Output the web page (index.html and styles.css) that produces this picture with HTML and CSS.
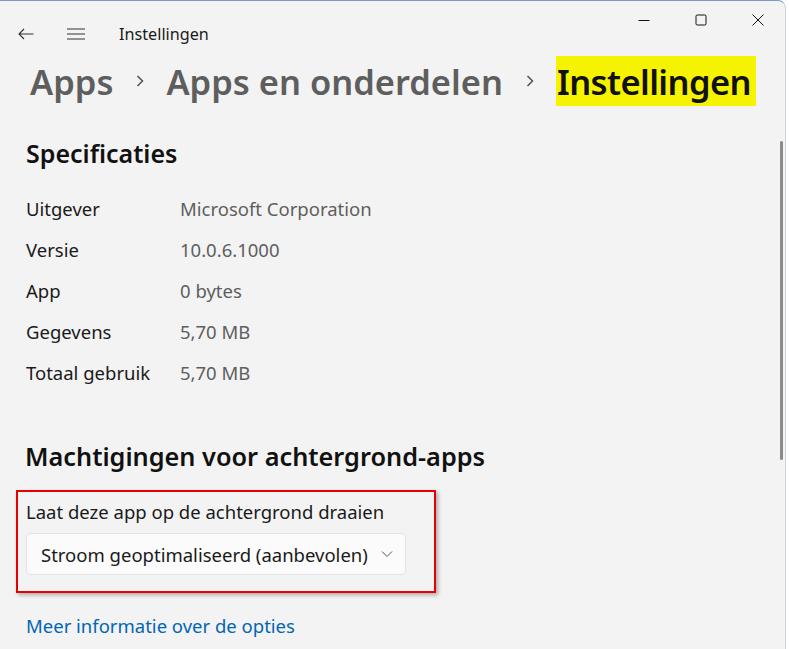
FILE: index.html
```html
<!DOCTYPE html>
<html>
<head>
  <title>Instellingen</title>
  <link rel="stylesheet" href="styles.css">
</head>
<body>
  <div class="window">
    <header class="titlebar">
      <div class="nav">
        <svg class="icon back" width="16" height="12" viewBox="0 0 16 12">
          <path d="M15.5 6H1M6 1L1 6l5 5" fill="none" stroke="#333" stroke-width="1.1"/>
        </svg>
        <svg class="icon menu" width="18" height="12" viewBox="0 0 18 12">
          <path d="M0 1h18M0 6h18M0 11h18" fill="none" stroke="#333" stroke-width="1.1"/>
        </svg>
        <span class="apptitle">Instellingen</span>
      </div>
      <div class="controls">
        <svg width="12" height="12" viewBox="0 0 12 12"><path d="M0.5 6.5h11" stroke="#111" stroke-width="1"/></svg>
        <svg width="12" height="12" viewBox="0 0 12 12"><rect x="1" y="1" width="10" height="10" rx="1.2" fill="none" stroke="#111" stroke-width="1"/></svg>
        <svg width="12" height="12" viewBox="0 0 12 12"><path d="M0.5 0.5l11 11M11.5 0.5l-11 11" stroke="#111" stroke-width="1"/></svg>
      </div>
    </header>

    <h1 class="crumbs">
      <span class="crumb">Apps</span>
      <svg class="sep" width="10" height="14" viewBox="0 0 10 14"><path d="M2.5 2l5 5-5 5" fill="none" stroke="#555" stroke-width="1.6"/></svg>
      <span class="crumb">Apps en onderdelen</span>
      <svg class="sep" width="10" height="14" viewBox="0 0 10 14"><path d="M2.5 2l5 5-5 5" fill="none" stroke="#555" stroke-width="1.6"/></svg>
      <span class="crumb current">Instellingen</span>
    </h1>

    <main class="content">
      <h2>Specificaties</h2>
      <dl class="specs">
        <dt>Uitgever</dt><dd>Microsoft Corporation</dd>
        <dt>Versie</dt><dd>10.0.6.1000</dd>
        <dt>App</dt><dd>0 bytes</dd>
        <dt>Gegevens</dt><dd>5,70 MB</dd>
        <dt>Totaal gebruik</dt><dd>5,70 MB</dd>
      </dl>

      <h2 class="perms">Machtigingen voor achtergrond-apps</h2>
      <div class="marked">
        <p class="label">Laat deze app op de achtergrond draaien</p>
        <div class="select">
          <span>Stroom geoptimaliseerd (aanbevolen)</span>
          <svg width="12" height="8" viewBox="0 0 12 8"><path d="M1 1.5l5 5 5-5" fill="none" stroke="#555" stroke-width="1"/></svg>
        </div>
      </div>
      <a class="more" href="#opties">Meer informatie over de opties</a>
    </main>

    <div class="scrollbar"></div>
  </div>
</body>
</html>
```

FILE: styles.css
```css
html, body {
  margin: 0;
  padding: 0;
  background: #fff;
}

body {
  font-family: "Noto Sans", "Open Sans", sans-serif;
  color: #1a1a1a;
}

.window {
  position: relative;
  width: 785px;
  height: 648px;
  background: #f3f3f3;
  border-top: 1px solid #7b9cbf;
  border-right: 1px solid #c9d6e4;
  border-top-right-radius: 8px;
  overflow: hidden;
}

.titlebar {
  display: flex;
  justify-content: space-between;
  height: 50px;
}

.nav {
  display: flex;
  align-items: center;
  padding: 15px 0 0 18px;
}

.icon.back {
  margin-right: 33px;
}

.icon.menu {
  margin-right: 34px;
}

.apptitle {
  font-size: 16.2px;
  color: #1a1a1a;
}

.controls {
  display: flex;
  align-items: flex-start;
  gap: 45px;
  padding: 13px 21px 0 0;
}

.crumbs {
  display: flex;
  align-items: center;
  margin: 5px 0 0 30px;
  font-size: 34.5px;
  font-weight: 600;
  color: #5e5e5e;
}

.crumb.current {
  color: #111;
  background: #f6f300;
  padding: 2px 5px 1px 1px;
  letter-spacing: -0.6px;
}

.sep {
  margin: 0 21px 0 22px;
}

.content {
  padding: 0 26px;
}

h2 {
  margin: 30px 0 25px;
  font-size: 25px;
  font-weight: 600;
  color: #111;
}

.specs {
  display: grid;
  grid-template-columns: 154px auto;
  row-gap: 14px;
  margin: 0;
  font-size: 18.5px;
  line-height: 27px;
}

.specs dt {
  color: #1a1a1a;
}

.specs dd {
  margin: 0;
  color: #5e5e5e;
}

.perms {
  margin: 53px 0 17px -1px;
  font-size: 25.3px;
}

.marked {
  width: 390px;
  margin-left: -10px;
  padding: 7px 18px 16px 8px;
  border: 2px solid #e60000;
  box-shadow: 2px 2px 4px rgba(0, 0, 0, 0.3);
}

.label {
  margin: 0 0 9px;
  font-size: 18.5px;
}

.select {
  display: flex;
  align-items: center;
  justify-content: space-between;
  width: 352px;
  height: 40px;
  padding: 0 12px 0 14px;
  background: #fbfbfb;
  border: 1px solid #e3e3e3;
  border-radius: 4px;
  font-size: 18.5px;
  color: #1a1a1a;
}

.more {
  display: block;
  margin-top: 20px;
  font-size: 18.5px;
  color: #0066b4;
  text-decoration: none;
}

.scrollbar {
  position: absolute;
  right: 2px;
  top: 140px;
  width: 3px;
  height: 319px;
  border-radius: 2px;
  background: #8a8a8a;
}
```
